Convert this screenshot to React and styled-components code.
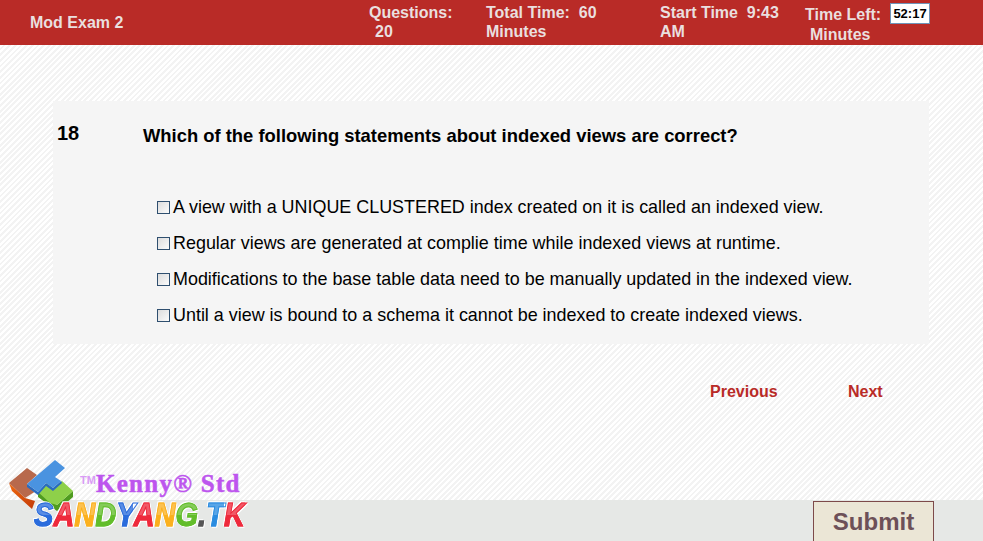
import React from 'react'
import styled, { createGlobalStyle } from 'styled-components'

const GlobalStyle = createGlobalStyle`
    html, body {
        margin:0;
        padding:0;
        height:100%;
        overflow:hidden;
    }
    body {
        font-family:"Liberation Sans", Arial, sans-serif;
        background-color:#fff;
    }
`

const Page = styled.div`
    position:relative;
    height:541px;
    display:flex;
    flex-direction:column;
    overflow:hidden;
    background:repeating-linear-gradient(135deg, #fff 0, #fff 2px, #f3f3f3 2px, #f3f3f3 4px);
`

const Header = styled.header`
    height:45px;
    flex-shrink:0;
    display:flex;
    padding:3px 0 0 30px;
    box-sizing:border-box;
    background:#b92b27;
    color:#eadfdf;
    font-size:16px;
    font-weight:bold;
    line-height:19px;
`

const ExamName = styled.div`
    width:339px;
    padding-top:10px;
`

const HeaderItem = styled.div`
    width:${p => p.$width}px;
    padding-top:${p => p.$top || 0}px;
    line-height:${p => p.$lead || 19}px;
    white-space:pre-wrap;
`

const Indented = styled.div`
    padding-left:${p => p.$by}px;
`

const Timer = styled.div`
    width:38px;
    height:19px;
    border:1px solid #6f94b8;
    background:#fff;
    color:#000;
    font-size:13px;
    line-height:19px;
    text-align:center;
`

const Main = styled.main`
    flex:1;
    padding:56px 54px 0 53px;
`

const Card = styled.section`
    height:243px;
    box-sizing:border-box;
    padding:23px 4px 0;
    background:#f5f5f5;
`

const QuestionRow = styled.div`
    display:flex;
    color:#000;
    font-weight:bold;
`

const Number = styled.div`
    width:86px;
    font-size:20px;
    line-height:18px;
`

const QuestionText = styled.div`
    font-size:18.4px;
    line-height:24px;
`

const Options = styled.div`
    margin-top:47px;
    padding-left:100px;
    display:flex;
    flex-direction:column;
    gap:12px;
`

const Option = styled.label`
    display:flex;
    align-items:center;
    height:24px;
    color:#000;
    font-size:17.93px;
`

const Check = styled.span`
    width:11px;
    height:11px;
    margin-right:3px;
    flex-shrink:0;
    border:1px solid #2f4f6f;
    background:linear-gradient(135deg, #dcdcdc, #fbfbfb);
`

const Pager = styled.nav`
    display:flex;
    padding:38px 0 0 657px;
`

const PagerLink = styled.a`
    flex:0 0 138px;
    color:#b92b27;
    font-size:16px;
    font-weight:bold;
    line-height:20px;
`

const Footer = styled.footer`
    height:41px;
    flex-shrink:0;
    display:flex;
    justify-content:flex-end;
    padding:1px 49px 0 0;
    box-sizing:border-box;
    background:#e6e8e6;
`

const SubmitButton = styled.button`
    width:121px;
    height:50px;
    padding:0 0 8px;
    box-sizing:border-box;
    border:1px solid #7d4a4a;
    background:#ebe6d6;
    color:#6d5058;
    font-family:inherit;
    font-size:24px;
    font-weight:bold;
`

const Logo = styled.div`
    position:absolute;
    left:8px;
    top:459px;
    width:240px;
    height:76px;
`

const LogoMark = styled.svg`
    position:absolute;
    left:0;
    top:0;
`

const Kenny = styled.div`
    position:absolute;
    left:72px;
    top:11px;
    color:#bd55ee;
    font-family:"Liberation Serif", serif;
    font-size:25px;
    font-weight:bold;
    letter-spacing:1.3px;
    white-space:nowrap;
    -webkit-text-stroke:0.5px #bd55ee;
    sup {
        font-family:"Liberation Sans", sans-serif;
        font-size:11px;
        color:#d99bf5;
        letter-spacing:0;
        vertical-align:8px;
        line-height:0;
        -webkit-text-stroke:0;
    }
`

const Brand = styled.div`
    position:absolute;
    left:26px;
    top:37px;
    font-family:"Liberation Sans", sans-serif;
    font-size:33px;
    font-weight:bold;
    font-style:italic;
    white-space:nowrap;
    transform:scaleX(0.88);
    transform-origin:left top;
    filter:drop-shadow(1px 1px 0 #fff) drop-shadow(-1px -1px 0 #fff);
`

const BrandLetter = styled.span`
    color:transparent;
    background:linear-gradient(180deg, color-mix(in srgb, ${p => p.$color} 78%, #fff) 0 52%, ${p => p.$color} 52%);
    -webkit-background-clip:text;
    background-clip:text;
    -webkit-text-stroke:1px ${p => p.$color};
`

const brandLetters = [
    ['S', '#2a6cdc'],
    ['A', '#ee2a3c'],
    ['N', '#fbb01e'],
    ['D', '#62bd2a'],
    ['Y', '#2a6cdc'],
    ['A', '#ee2a3c'],
    ['N', '#fbb01e'],
    ['G', '#62bd2a'],
    ['.', '#555555'],
    ['T', '#2a8ce0'],
    ['K', '#ee2a3c'],
]

const options = [
    'A view with a UNIQUE CLUSTERED index created on it is called an indexed view.',
    'Regular views are generated at complie time while indexed views at runtime.',
    'Modifications to the base table data need to be manually updated in the indexed view.',
    'Until a view is bound to a schema it cannot be indexed to create indexed views.',
]

const App = () => {
    return (
        <React.Fragment>
            <GlobalStyle />
            <Page>
                <Header>
                    <ExamName>Mod Exam 2</ExamName>
                    <HeaderItem $width={117}>
                        Questions:
                        <Indented $by={6}>20</Indented>
                    </HeaderItem>
                    <HeaderItem $width={174}>{'Total Time:  60\nMinutes'}</HeaderItem>
                    <HeaderItem $width={145}>{'Start Time  9:43\nAM'}</HeaderItem>
                    <HeaderItem $width={85} $top={2} $lead={20}>
                        Time Left:
                        <Indented $by={5}>Minutes</Indented>
                    </HeaderItem>
                    <Timer>52:17</Timer>
                </Header>
                <Main>
                    <Card>
                        <QuestionRow>
                            <Number>18</Number>
                            <QuestionText>Which of the following statements about indexed views are correct?</QuestionText>
                        </QuestionRow>
                        <Options>
                            {options.map(text => (
                                <Option key={text}>
                                    <Check />
                                    {text}
                                </Option>
                            ))}
                        </Options>
                    </Card>
                    <Pager>
                        <PagerLink>Previous</PagerLink>
                        <PagerLink>Next</PagerLink>
                    </Pager>
                </Main>
                <Footer>
                    <SubmitButton>Submit</SubmitButton>
                </Footer>
                <Logo>
                    <LogoMark width="70" height="56" viewBox="0 0 70 56">
                        <defs>
                            <linearGradient id="orangeFront" x1="0" y1="0" x2="1" y2="1">
                                <stop offset="0" stopColor="#f06a10" />
                                <stop offset="1" stopColor="#c23a08" />
                            </linearGradient>
                        </defs>
                        <polygon points="1,24 4,32 24,50 27,42 17,39" fill="url(#orangeFront)" />
                        <polygon points="1,24 19,9 29,16 19,25 28,32 17,39" fill="#b8694c" />
                        <polygon points="30,33 30,38 49,52 65,38 65,32 49,46" fill="#4f9c20" />
                        <polygon points="30,33 39,24 45,29 54,22 65,32 49,46 42,44" fill="#8ed04a" />
                        <polygon points="19,25 19,28 30,36 38,27 45,32 54,24 53,22 45,29 38,24 30,33" fill="#2a6bc0" />
                        <polygon points="19,25 47,1 57,9 47,18 53,22 45,29 38,24 30,33" fill="#4a93e0" />
                    </LogoMark>
                    <Kenny><sup>TM</sup>Kenny® Std</Kenny>
                    <Brand>
                        {brandLetters.map(([letter, color], i) => (
                            <BrandLetter key={i} $color={color}>{letter}</BrandLetter>
                        ))}
                    </Brand>
                </Logo>
            </Page>
        </React.Fragment>
    )
}

export default App
